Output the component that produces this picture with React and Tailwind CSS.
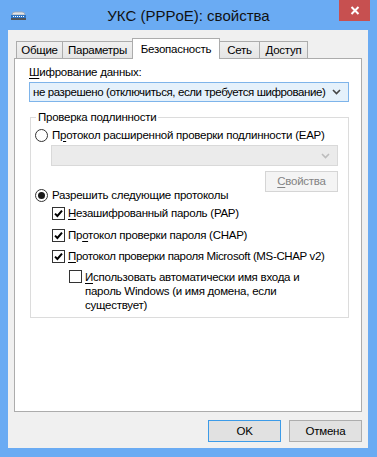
import React from "react";

const Check = () => (
  <svg width="9" height="9" viewBox="0 0 9 9">
    <path d="M1 4.6 L3.4 7 L8 1.6" stroke="#000" strokeWidth="2" fill="none" />
  </svg>
);

function Checkbox({ checked }) {
  return (
    <span className="flex h-[13px] w-[13px] shrink-0 items-center justify-center border border-[#333333] bg-white">
      {checked && <Check />}
    </span>
  );
}

function Radio({ checked }) {
  return (
    <span className="flex h-[13px] w-[13px] shrink-0 items-center justify-center rounded-full border border-[#333333] bg-white">
      {checked && <span className="h-[7px] w-[7px] rounded-full bg-[#1a1a1a]" />}
    </span>
  );
}

const Chevron = ({ color }) => (
  <svg width="9" height="6" viewBox="0 0 9 6" className="shrink-0">
    <path d="M1 1 L4.5 4.5 L8 1" stroke={color} strokeWidth="1.6" fill="none" />
  </svg>
);

function Tab({ children, w }) {
  return (
    <div
      className={`-ml-px flex h-[17px] items-center justify-center border border-b-0 border-[#acacac] bg-linear-to-b from-[#f0f0f0] to-[#e5e5e5] ${w}`}
    >
      {children}
    </div>
  );
}

export default function App() {
  return (
    <div className="flex h-[457px] w-[377px] flex-col whitespace-nowrap bg-[#6aabf3] font-['Liberation_Sans',sans-serif] text-[11.5px] leading-[15px] tracking-[-0.25px] text-black">
      {/* title bar */}
      <div className="grid h-[30px] shrink-0 grid-cols-[1fr_auto_1fr]">
        <div className="flex items-start pl-[10px] pt-[11px]">
          <svg width="17" height="9" viewBox="0 0 17 9">
            <path d="M2 4 Q2 1 5 1 H12 Q15 1 15 4 Z" fill="#dfe3e8" stroke="#9aa3ad" strokeWidth="0.8" />
            <rect x="1" y="4" width="15" height="3" fill="#2d74c4" />
            <rect x="3" y="5" width="1" height="1" fill="#fff" />
            <rect x="5" y="5" width="1" height="1" fill="#fff" />
            <rect x="7" y="5" width="1" height="1" fill="#fff" />
            <rect x="9" y="5" width="1" height="1" fill="#fff" />
            <rect x="11" y="5" width="1" height="1" fill="#fff" />
            <rect x="13" y="5" width="1" height="1" fill="#fff" />
            <rect x="1" y="7" width="15" height="2" fill="#4d545c" />
          </svg>
        </div>
        <div className="flex items-start pt-[7px] text-[15px] leading-[18px] tracking-normal text-[#111111]">
          УКС (PPPoE): свойства
        </div>
        <div className="flex items-start justify-end pr-[7px]">
          <div className="flex h-[21px] w-[31px] items-center justify-center bg-[#c75050]">
            <svg width="10" height="9" viewBox="0 0 10 9">
              <path d="M1.5 1 L8.5 8 M8.5 1 L1.5 8" stroke="#fff" strokeWidth="2" />
            </svg>
          </div>
        </div>
      </div>

      {/* client area */}
      <div className="mb-[9px] ml-[8px] mr-[9px] flex flex-1 flex-col bg-[#f0f0f0] pt-[8px]">
        <div className="mx-[6px] flex flex-col">
          <div className="relative z-10 flex items-end pl-[3px]">
            <Tab w="w-[47px]">Общие</Tab>
            <Tab w="w-[71px]">Параметры</Tab>
            <div className="relative z-10 -ml-px mb-[-1px] flex h-[21px] w-[88px] items-center justify-center border border-b-0 border-[#acacac] bg-white">
              Безопасность
            </div>
            <Tab w="w-[41px]">Сеть</Tab>
            <Tab w="w-[49px]">Доступ</Tab>
          </div>

          <div className="flex h-[354px] flex-col border border-[#acacac] bg-white pl-[14px] pt-[6px]">
            <div>
              <u className="decoration-1 underline-offset-2">Ш</u>ифрование данных:
            </div>
            <div className="mt-[2px] flex h-[20px] w-[320px] items-center justify-between border border-[#7eb4ea] bg-[#e5f1fb] pl-[3px] pr-[7px]">
              <span className="tracking-[-0.4px]">не разрешено (отключиться, если требуется шифрование)</span>
              <Chevron color="#444444" />
            </div>

            <fieldset className="ml-[1px] mt-[8px] w-[319px] border border-[#dcdcdc] pb-[5px]">
              <legend className="ml-[5px] px-[2px] leading-[15px]">Проверка подлинности</legend>

              <div className="mt-[2px] flex h-[16px] items-center gap-[4px] pl-[4px]">
                <Radio />
                <span>
                  П<u className="decoration-1 underline-offset-2">р</u>отокол расширенной проверки подлинности (EAP)
                </span>
              </div>

              <div className="ml-[20px] mt-[2px] flex h-[21px] w-[287px] items-center justify-end border border-[#d9d9d9] bg-[#ebebeb] pr-[7px]">
                <Chevron color="#bcbcbc" />
              </div>

              <div className="ml-[234px] mt-[5px] flex h-[21px] w-[73px] items-center justify-center border border-[#d5d5d5] bg-[#f4f4f4] text-[#838383]">
                <span>
                  <u className="decoration-1 underline-offset-2">С</u>войства
                </span>
              </div>

              <div className="-mt-[5px] flex h-[16px] items-center gap-[4px] pl-[4px]">
                <Radio checked />
                <span>
                  Разрешить сле<u className="decoration-1 underline-offset-2">д</u>ующие протоколы
                </span>
              </div>

              <div className="-mt-[1px] flex h-[22px] items-center gap-[3px] pl-[21px]">
                <Checkbox checked />
                <span>
                  <u className="decoration-1 underline-offset-2">Н</u>езашифрованный пароль (PAP)
                </span>
              </div>
              <div className="flex h-[22px] items-center gap-[3px] pl-[21px]">
                <Checkbox checked />
                <span>
                  Пр<u className="decoration-1 underline-offset-2">о</u>токол проверки пароля (CHAP)
                </span>
              </div>
              <div className="flex h-[21px] items-center gap-[3px] pl-[21px]">
                <Checkbox checked />
                <span className="tracking-[-0.35px]">
                  <u className="decoration-1 underline-offset-2">П</u>ротокол проверки пароля Microsoft (MS-CHAP v2)
                </span>
              </div>
              <div className="mt-[3px] flex items-start gap-[3px] pl-[38px]">
                <Checkbox />
                <span className="leading-[14px]">
                  <u className="decoration-1 underline-offset-2">И</u>спользовать автоматически имя входа и
                  <br />
                  пароль Windows (и имя домена, если
                  <br />
                  существует)
                </span>
              </div>
            </fieldset>
          </div>
        </div>

        <div className="mt-[8px] flex justify-end gap-[8px] pr-[6px]">
          <div className="flex h-[22px] w-[73px] items-center justify-center border border-[#3c9be8] bg-[#e1e1e1]">
            OK
          </div>
          <div className="flex h-[22px] w-[73px] items-center justify-center border border-[#adadad] bg-[#e1e1e1]">
            Отмена
          </div>
        </div>
      </div>
    </div>
  );
}
